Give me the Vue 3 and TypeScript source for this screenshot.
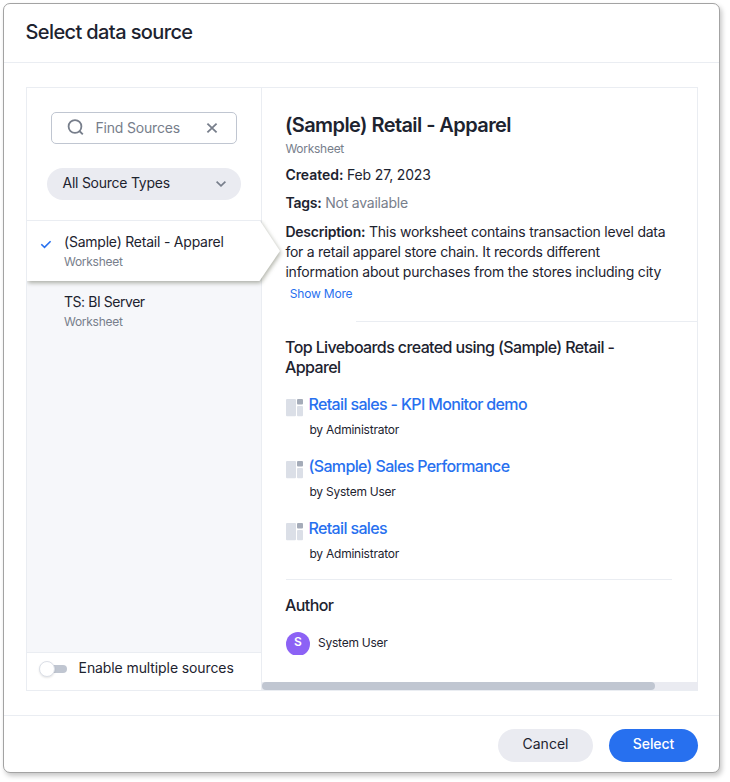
<script setup lang="ts">
import { ref } from 'vue'

interface Source {
  name: string
  kind: string
}

interface Liveboard {
  title: string
  author: string
}

const sources: Source[] = [
  { name: '(Sample) Retail - Apparel', kind: 'Worksheet' },
  { name: 'TS: BI Server', kind: 'Worksheet' },
]
const selected = ref(0)

const description: string[] = [
  'This worksheet contains transaction level data',
  'for a retail apparel store chain. It records different',
  'information about purchases from the stores including city',
]

const liveboards: Liveboard[] = [
  { title: 'Retail sales - KPI Monitor demo', author: 'Administrator' },
  { title: '(Sample) Sales Performance', author: 'System User' },
  { title: 'Retail sales', author: 'Administrator' },
]
</script>

<template>
  <div class="page">
    <div class="dialog">
      <header class="head"><span class="head-title">Select data source</span></header>

      <main class="body">
        <div class="panel">
          <aside class="side">
            <div class="filters">
              <div class="search">
                <svg class="search-icon" width="18" height="18" viewBox="0 0 18 18">
                  <circle cx="8" cy="7.5" r="6.4" />
                  <path d="M12.4 12L15.8 15.4" />
                </svg>
                <span class="search-text">Find Sources</span>
                <svg class="clear-icon" width="12" height="12" viewBox="0 0 12 12">
                  <path d="M1.4 1.6L10.6 10.4M10.6 1.6L1.4 10.4" />
                </svg>
              </div>
              <div class="types">
                <span class="types-text">All Source Types</span>
                <svg class="chevron" width="12" height="8" viewBox="0 0 12 8">
                  <path d="M1.6 1.6L6 5.8L10.4 1.6" />
                </svg>
              </div>
            </div>

            <div class="list">
              <div
                v-for="(s, i) in sources"
                :key="s.name"
                class="source"
                :class="{ active: i === selected }"
                @click="selected = i"
              >
                <svg v-if="i === selected" class="arrow" width="268" height="76" viewBox="0 0 268 76">
                  <path class="arrow-shape" d="M0 0H232.500L253 31L232.500 61H0Z" />
                  <path class="arrow-line" d="M0 0.500H233" />
                </svg>
                <div class="mark">
                  <svg v-if="i === selected" class="check" width="12" height="9" viewBox="0 0 12 9">
                    <path d="M1.300 4.300L4.500 7.400L10.600 1.200" />
                  </svg>
                </div>
                <div class="source-text">
                  <div class="source-name">{{ s.name }}</div>
                  <div class="kind">{{ s.kind }}</div>
                </div>
              </div>
            </div>

            <div class="multi">
              <div class="toggle"><div class="knob"></div><div class="track"></div></div>
              <span class="multi-text">Enable multiple sources</span>
            </div>
          </aside>

          <section class="detail">
            <div class="content">
              <h1 class="name">(Sample) Retail - Apparel</h1>
              <div class="kind">Worksheet</div>
              <div class="meta created"><b>Created:</b> Feb 27, 2023</div>
              <div class="meta tags"><b>Tags:</b> <span class="muted">Not available</span></div>
              <div class="meta desc">
                <div v-for="(line, i) in description" :key="i" :class="'line-' + i">
                  <b v-if="i === 0">Description:</b> {{ line }}
                </div>
              </div>
              <div class="more">Show More</div>
            </div>
            <div class="rule-top"></div>
            <div class="boards">
              <h2 class="sub">Top Liveboards created using (Sample) Retail -<br />Apparel</h2>
              <div v-for="b in liveboards" :key="b.title" class="board">
                <svg class="board-icon" width="17" height="18" viewBox="0 0 17 18">
                  <rect x="0" y="0" width="10" height="17.200" rx="1" fill="#dbdfe7" />
                  <rect x="11" y="0" width="6" height="5.400" rx="1" fill="#a5acb9" />
                  <rect x="11" y="7" width="6" height="10.200" rx="1" fill="#dbdfe7" />
                </svg>
                <div class="board-text">
                  <div class="board-title">{{ b.title }}</div>
                  <div class="by">by {{ b.author }}</div>
                </div>
              </div>
            </div>
            <div class="author">
              <h2 class="sub">Author</h2>
              <div class="user">
                <div class="avatar-clip"><div class="avatar">S</div></div>
                <span class="by">System User</span>
              </div>
            </div>
            <div class="scrollbar"><div class="thumb"></div></div>
          </section>
        </div>
      </main>

      <footer class="foot">
        <button class="btn cancel" type="button">Cancel</button>
        <button class="btn select" type="button">Select</button>
      </footer>
    </div>
  </div>
</template>

<style>
body {
  background: #fff;
}
</style>

<style scoped>
* {
  box-sizing: border-box;
}
.page {
  width: 730px;
  height: 782px;
  padding: 3px;
  overflow: hidden;
  font-family: Inter, 'Liberation Sans', sans-serif;
  font-size: 14px;
  color: #1d232f;
  white-space: nowrap;
}
.dialog {
  width: 717px;
  height: 770px;
  border: 1px solid #a3a3a3;
  border-radius: 7px;
  background: #fff;
  box-shadow: 2px 3px 5px rgba(0, 0, 0, 0.22);
  display: flex;
  flex-direction: column;
}
.head {
  height: 59px;
  border-bottom: 1px solid #eaedf2;
  padding: 15px 0 0 21.5px;
  font-size: 20px;
  font-weight: 500;
  line-height: 26px;
  letter-spacing: -0.61px;
}
.body {
  flex: 1;
  padding: 24px 21px 24px 22px;
}
.panel {
  height: 604px;
  border: 1px solid #eaedf2;
  display: flex;
}
.side {
  width: 235px;
  border-right: 1px solid #eaedf2;
  display: flex;
  flex-direction: column;
}
.filters {
  height: 132px;
  padding: 24px 20px 0;
  display: flex;
  flex-direction: column;
  gap: 24px;
}
.search {
  height: 32px;
  width: 186px;
  margin-left: 4px;
  border: 1px solid #c0c6d1;
  border-radius: 5px;
  display: flex;
  align-items: center;
  padding: 0 18px 0 15px;
  color: #777e8b;
}
.search-icon {
  margin-right: 10.400px;
}
.search-icon,
.clear-icon,
.chevron,
.check {
  fill: none;
  stroke: #777e8b;
  stroke-width: 1.8;
}
.search-text {
  flex: 1;
  padding-bottom: 1px;
  letter-spacing: -0.17px;
}
.types {
  height: 32px;
  width: 194px;
  border-radius: 16px;
  background: #eaebf1;
  display: flex;
  align-items: center;
  justify-content: space-between;
  padding: 0 14px 1px 15.500px;
}
.types-text {
  padding-bottom: 2px;
  letter-spacing: -0.25px;
}
.chevron {
  stroke-width: 1.7;
}
.list {
  flex: 1;
  background: #f6f7fa;
}
.source {
  position: relative;
  height: 60px;
  display: flex;
  padding: 12px 0 0 13px;
}
.arrow {
  position: absolute;
  left: 0;
  top: 0;
  overflow: visible;
  clip-path: inset(0 0 0 0);
}
.arrow-shape {
  fill: #fff;
  filter: drop-shadow(1px 2px 2px rgba(60, 65, 40, 0.4));
}
.arrow-line {
  stroke: #eaedf2;
}
.mark {
  position: relative;
  width: 24px;
  padding-top: 3px;
}
.check {
  stroke: #2770ef;
  stroke-width: 1.6;
}
.source-text {
  position: relative;
}
.source-name {
  line-height: 20px;
  letter-spacing: -0.45px;
}
.active .source-name {
  letter-spacing: -0.22px;
}
.kind {
  font-size: 12px;
  line-height: 18px;
  letter-spacing: -0.27px;
  color: #777e8b;
}
.source .kind {
  line-height: 20px;
}
.multi {
  height: 38px;
  border-top: 1px solid #eaedf2;
  padding: 0 0 6px 12px;
  display: flex;
  align-items: center;
}
.multi-text {
  padding-bottom: 2px;
  letter-spacing: -0.1px;
}
.toggle {
  width: 39.600px;
  display: flex;
  align-items: center;
}
.knob {
  position: relative;
  width: 16px;
  height: 16px;
  border: 1px solid #dbdfe7;
  border-radius: 50%;
  background: #fff;
  box-shadow: 0 1px 2px rgba(0, 0, 0, 0.1);
}
.track {
  width: 18px;
  height: 8px;
  margin-left: -6px;
  border-radius: 4px;
  background: #c0c6d1;
}
.detail {
  flex: 1;
  min-width: 0;
  display: flex;
  flex-direction: column;
}
.content {
  height: 233px;
  padding: 23px 0 0 23.400px;
}
h1,
h2 {
  margin: 0;
}
.name {
  margin-left: -0.500px;
  font-size: 20px;
  font-weight: 600;
  line-height: 28px;
  letter-spacing: -0.58px;
}
.content .kind {
  margin-top: 1px;
}
.meta {
  line-height: 20px;
  letter-spacing: -0.17px;
}
.meta b {
  font-weight: 600;
}
.created b {
  letter-spacing: -0.05px;
}
.created {
  margin-top: 7px;
}
.tags {
  margin-top: 8px;
  letter-spacing: -0.22px;
}
.muted {
  color: #777e8b;
}
.desc {
  margin-top: 9px;
}
.line-0 {
  letter-spacing: -0.22px;
}
.line-1 {
  letter-spacing: -0.25px;
}
.line-2 {
  letter-spacing: -0.18px;
}
.more {
  padding-left: 4.400px;
  margin-top: 4px;
  font-size: 12px;
  line-height: 16px;
  letter-spacing: -0.2px;
  color: #2770ef;
}
.rule-top {
  height: 1px;
  margin-left: 94px;
  background: #eaedf2;
}
.boards {
  height: 258px;
  margin: 0 25px 0 24px;
  padding-top: 15px;
  border-bottom: 1px solid #eaedf2;
}
.sub {
  margin-left: -0.900px;
  font-size: 16px;
  font-weight: 500;
  line-height: 20px;
  letter-spacing: -0.61px;
}
.board {
  height: 62px;
  display: flex;
  padding-top: 17px;
}
.board-icon {
  margin: 5px 5.500px 0 0;
}
.board-title {
  font-size: 16px;
  font-weight: 500;
  line-height: 20px;
  letter-spacing: -0.65px;
  color: #2770ef;
}
.by {
  font-size: 12px;
  line-height: 16px;
  letter-spacing: -0.24px;
}
.board .by {
  margin: 8px 0 0 1px;
}
.author {
  flex: 1;
  padding: 15px 0 0 24px;
}
.user {
  display: flex;
  align-items: flex-start;
  margin-top: 17px;
}
.user .by {
  margin-top: 3px;
}
.avatar-clip {
  width: 24px;
  height: 23px;
  margin-right: 8px;
  overflow: hidden;
}
.avatar {
  height: 24px;
  border-radius: 50%;
  background: #8c62f5;
  color: #fff;
  font-size: 12px;
  font-weight: 600;
  line-height: 20px;
  text-align: center;
}
.scrollbar {
  height: 8px;
  margin-right: -1px;
  background: #eaebf1;
}
.thumb {
  width: 393px;
  height: 8px;
  border-radius: 4px;
  background: #c0c6d1;
}
.foot {
  height: 57px;
  border-top: 1px solid #eaedf2;
  padding: 13px 21px 0 0;
  display: flex;
  justify-content: flex-end;
  gap: 16px;
}
.btn {
  height: 33px;
  border: 0;
  border-radius: 17px;
  padding: 0 0 4px;
  font: inherit;
  color: #1d232f;
}
.cancel {
  width: 95px;
  background: #eaebf1;
}
.select {
  width: 89px;
  background: #2770ef;
  color: #fff;
  font-weight: 500;
  letter-spacing: -0.1px;
}
</style>
